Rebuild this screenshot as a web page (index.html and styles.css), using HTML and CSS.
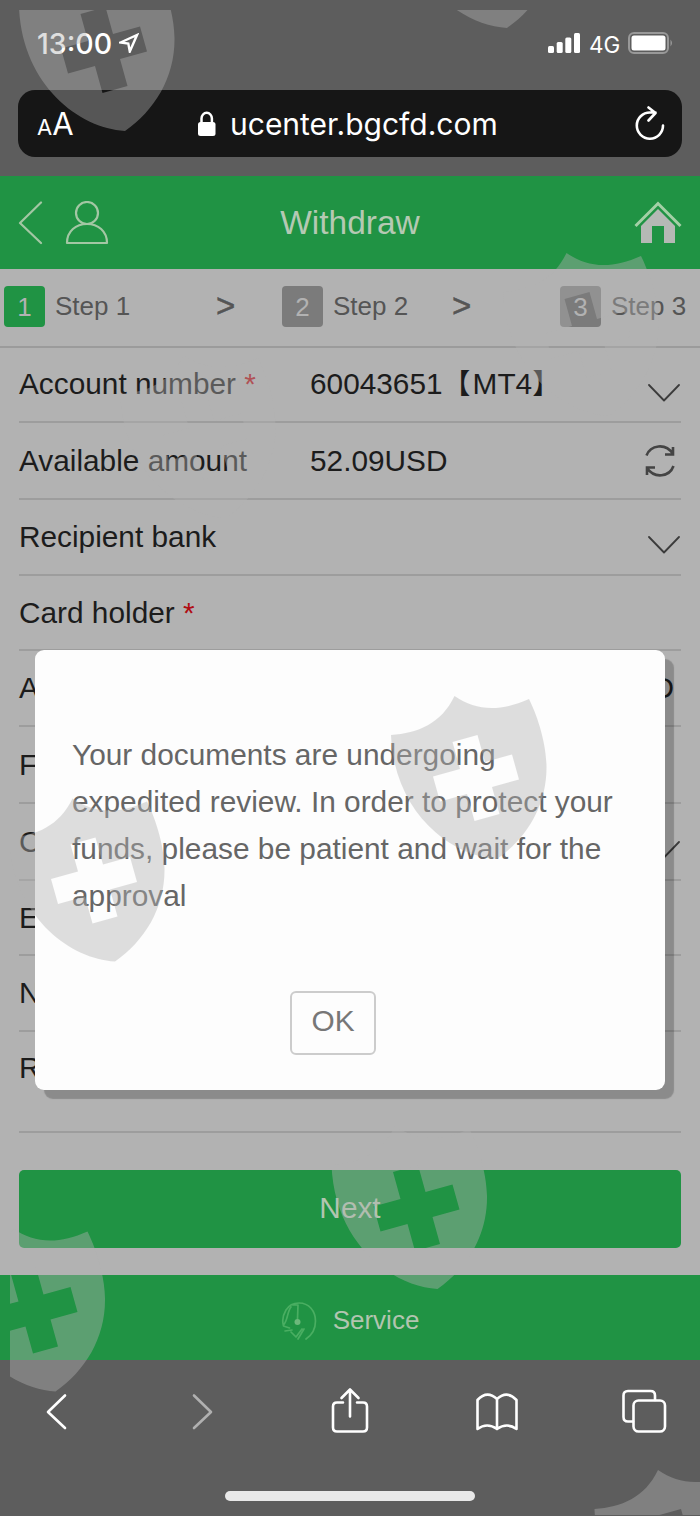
FILE: index.html
```html
<!DOCTYPE html>
<html lang="en">
<head>
<meta charset="utf-8">
<title>Withdraw</title>
<link rel="stylesheet" href="styles.css">
</head>
<body>
<div class="phone">
  <header class="status">
    <span class="clock">13:00</span>
    <svg class="locate" width="20" height="20" viewBox="0 0 20 20"><path d="M1.5 9.5 18 2 10.8 18.500 9.300 10.500Z"/></svg>
    <svg class="signal" width="32" height="20" viewBox="0 0 32 20"><rect x="0" y="13" width="6" height="7" rx="1.5"/><rect x="8.700" y="9" width="6" height="11" rx="1.5"/><rect x="17.300" y="4.500" width="6" height="15.500" rx="1.5"/><rect x="26" y="0" width="6" height="20" rx="1.5"/></svg>
    <span class="network">4G</span>
    <svg class="battery" width="46" height="22" viewBox="0 0 46 22"><rect class="case" x="1" y="1" width="39" height="20" rx="5"/><rect class="level" x="3.500" y="3.500" width="34" height="15" rx="2.500"/><path class="cap" d="M42.500 7.500q3 3.500 0 7z"/></svg>
  </header>
  <div class="address">
    <span class="reader"><small>A</small>A</span>
    <span class="site">
      <svg width="20" height="26" viewBox="0 0 20 26"><rect x="1" y="11" width="17.500" height="14" rx="2.500"/><path d="M4.500 12V7.500a5.200 5.700 0 0 1 10.400 0V12"/></svg>
      <span class="host">ucenter.bgcfd.com</span>
    </span>
    <svg class="reload" width="30" height="36" viewBox="0 0 30 36"><path d="M28 19.500A13.100 13.100 0 1 1 15 6.500h5.500M13.500 1.500 20.500 7 13.500 14.500"/></svg>
  </div>

  <nav class="titlebar">
    <svg class="back" width="26" height="44" viewBox="0 0 26 44"><path d="M23 1.500 2 22 23 42"/></svg>
    <svg class="user" width="44" height="44" viewBox="0 0 44 44"><circle cx="22" cy="12" r="11"/><path d="M2 42C2 30 11 23 22 23S42 30 42 42Z"/></svg>
    <h1>Withdraw</h1>
    <svg class="home" width="48" height="43" viewBox="0 0 48 43"><path class="roof" d="M1.500 25 24 2.500 46.500 25"/><path class="walls" d="M7 25 24 8 41 25V42H30V25H18V42H7Z"/></svg>
  </nav>

  <ol class="steps">
    <li class="on"><b>1</b>Step 1</li>
    <li class="arrow first">&gt;</li>
    <li><b>2</b>Step 2</li>
    <li class="arrow">&gt;</li>
    <li class="last"><b>3</b>Step 3</li>
  </ol>

  <main class="form">
    <div class="row"><label>Account number <i>*</i></label><span class="cjk">60043651<span class="bracket">【</span>MT4<span class="bracket">】</span></span><svg class="down" width="32" height="20" viewBox="0 0 32 20"><path d="M1 2 16 17.500 31 2"/></svg></div>
    <div class="row r77"><label>Available amount</label><span>52.09USD</span>
      <svg class="refresh" width="30" height="32" viewBox="0 0 30 32"><path d="M1.500 10.500C5.500 0 20.500-2.500 28 9M28 2V9.500H20M28.500 21C24.500 32 9.500 34 2 23M2 30V22.500H10"/></svg></div>
    <div class="row"><label>Recipient bank</label><svg class="down" width="32" height="20" viewBox="0 0 32 20"><path d="M1 2 16 17.500 31 2"/></svg></div>
    <div class="row r75"><label>Card holder <i>*</i></label></div>
    <div class="row"><label>A</label><span class="unit">USD</span></div>
    <div class="row r77"><label>F</label></div>
    <div class="row r77"><label>C</label><svg class="down" width="32" height="20" viewBox="0 0 32 20"><path d="M1 2 16 17.500 31 2"/></svg></div>
    <div class="row r75"><label>E</label></div>
    <div class="row"><label>N</label></div>
    <div class="row tall"><label>R</label></div>
    <button class="next">Next</button>
  </main>

  <footer class="service">
    <svg width="36" height="40" viewBox="0 0 36 40"><path d="M5 9C8 4 13 2 18 2 28 2 34.500 10 34.500 20 34.500 28 31 34 25 38M12 4H17L16.500 18M10 6C6 11 7 19 2.500 24M5 9C2 14 1 20 2.500 25l6 2M4 30l7-1M10 31l5 5 6-8M17 38l6-10"/><circle cx="16.500" cy="21" r="3"/></svg>
    <span>Service</span>
  </footer>

  <div class="toolbar">
    <svg width="110" height="48" viewBox="0 0 110 48"><path d="M63 9.500 46 26 63 42"/></svg>
    <svg class="dim" width="110" height="48" viewBox="0 0 110 48"><path d="M45 9.500 62 26 45 42"/></svg>
    <svg width="110" height="48" viewBox="0 0 110 48"><path d="M48 16.500H42Q38 16.500 38 20.500V41.500Q38 45.500 42 45.500H68Q72 45.500 72 41.500V20.500Q72 16.500 68 16.500H62M55 30.500V3.500M46.500 12 55 3.500 63.500 12"/></svg>
    <svg width="110" height="48" viewBox="0 0 110 48"><path d="M55 43Q45 36 35.500 43V14Q45 4 55 13 65 4 74.500 14V43Q65 36 55 43V13"/></svg>
    <svg width="110" height="48" viewBox="0 0 110 48"><rect x="45.500" y="14.500" width="31.500" height="31" rx="5"/><path d="M45 35.500H40Q35.500 35.500 35.500 31V9.500Q35.500 5 40 5H62.500Q67 5 67 9.500V14"/></svg>
  </div>
  <div class="indicator"></div>

  <section class="dialog">
    <p>Your documents are undergoing expedited review. In order to protect your funds, please be patient and wait for the approval</p>
    <button>OK</button>
  </section>

  <svg class="shields" width="700" height="1516" viewBox="0 0 700 1516">
    <defs>
      <clipPath id="inner"><rect x="10" y="10" width="690" height="1505"/></clipPath>
      <path id="shield" fill-rule="evenodd" d="M391 735C418 733 441 724 454.500 696 476 711 500 712 529 699 536 713 546 740 546.500 766 547 805 527 838 497 859 450 856 394 812 391 735ZM512 754.500 519 779.500 492 787 499.500 814 474.500 821 467 794 440 801.500 433 776.500 460 769 452.500 742 477.500 735 485 762Z"/>
    </defs>
    <g clip-path="url(#inner)">
      <use href="#shield"/>
      <use href="#shield" x="-382" y="102.500"/>
      <use href="#shield" x="-59.500" y="430"/>
      <use href="#shield" x="-441.500" y="532.500"/>
      <use href="#shield" x="-372" y="-728"/>
      <use href="#shield" x="10" y="-831"/>
      <use href="#shield" x="-271" y="-341"/>
      <use href="#shield" x="112" y="-443"/>
      <use href="#shield" x="203.500" y="774"/>
    </g>
  </svg>
</div>
</body>
</html>
```
FILE: styles.css
```css
* { box-sizing: border-box; }
body { margin: 0; background: #5d5d5d; }
svg { display: block; flex: none; fill: none; stroke-linecap: round; stroke-linejoin: round; }
button { font: inherit; border: 0; padding: 0; }

.phone {
  position: relative;
  display: flex;
  flex-direction: column;
  width: 700px;
  height: 1516px;
  overflow: hidden;
  background: #5d5d5d;
  font: 29.8px "Liberation Sans", Arial, "Noto Sans CJK SC", sans-serif;
  color: #1c1c1c;
}

.status {
  display: flex;
  align-items: center;
  height: 90px;
  padding: 0 26px 4px 37px;
  color: #fff;
  font-family: Inter, sans-serif;
}
.clock { width: 75px; margin-right: 7px; padding-top: 1px; font-size: 28.500px; font-weight: 500; white-space: nowrap; }
.locate { stroke: #fff; stroke-width: 2.400; stroke-linejoin: miter; }
.signal { margin-left: auto; fill: #fff; }
.network { width: 31px; margin: 0 8px 0 9px; padding-top: 2px; font-size: 22.500px; white-space: nowrap; }
.case { stroke: #999; stroke-width: 2; }
.level { fill: #fff; }
.cap { fill: #999; }

.address {
  display: flex;
  align-items: center;
  height: 67px;
  margin: 0 18px 19px;
  padding: 0 17px 0 19px;
  border-radius: 17px;
  background: #161616;
  color: #fff;
  font-family: Inter, sans-serif;
}
.reader { width: 40px; font-size: 31px; white-space: nowrap; }
.reader small { font-size: 22px; }
.site { display: flex; align-items: center; gap: 13px; margin-left: 120px; }
.site rect { fill: #fff; }
.site path { stroke: #fff; stroke-width: 2.500; }
.host { width: 268px; font-size: 30px; white-space: nowrap; }
.reload { margin-left: auto; stroke: #fff; stroke-width: 2.600; }

.titlebar {
  display: flex;
  align-items: center;
  height: 93px;
  padding: 0 18px 0 18px;
  background: #209344;
  color: #b5c9b3;
}
.back, .user { stroke: #a3c7a4; stroke-width: 2.200; }
.user { margin-left: 21px; }
.titlebar h1 { flex: 1; margin: 0; padding-right: 43px; text-align: center; font-size: 33.500px; font-weight: 400; }
.roof { stroke: #a3d0a6; stroke-width: 3; stroke-linecap: butt; stroke-linejoin: miter; }
.walls { fill: #b5b9b5; }

.steps {
  display: flex;
  align-items: center;
  height: 79px;
  margin: 0;
  padding: 0 0 3px 4px;
  border-bottom: 2px solid #9b9b9b;
  background: #b2b2b2;
  color: #555;
  font-size: 26px;
  list-style: none;
}
.steps li { display: flex; align-items: center; gap: 10px; width: 278px; }
.steps b { width: 41px; height: 41px; border-radius: 4px; background: #7b7b7b; color: #b2b2b2; font-weight: 400; line-height: 42px; text-align: center; }
.steps .on b { background: #209344; }
.steps .on { width: 212px; }
.steps .arrow { width: 108px; font-size: 33px; -webkit-text-stroke: .5px #555; }
.steps .first { width: 66px; }
.steps li:nth-child(3) { width: 170px; }
.steps .last { width: 140px; }

.form { height: 927px; padding: 0 19px; background: #b2b2b2; }
.row { display: flex; align-items: center; height: 76px; border-bottom: 2px solid #9d9d9d; padding-right: 1px; white-space: nowrap; }
.row:first-child { height: 75px; }
.row label { width: 291px; }
.row i { display: inline-block; color: #b00d14; font-style: normal; }
.row:first-child label, .cjk { line-height: 34px; margin-top: -1px; }
.bracket { display: inline-block; width: 30px; font-size: 28px; line-height: 30px; }
.r77 { height: 77px !important; }
.r75 { height: 75px; }
.tall { height: 101px; padding-bottom: 27px; }
.unit { margin-left: auto; margin-right: 6px; }
.down { margin: 16px 0 0 auto; stroke: #3b3b3b; stroke-width: 1.800; }
.refresh { margin-left: auto; margin-right: 5px; stroke: #444; stroke-width: 2.600; stroke-linejoin: miter; stroke-linecap: butt; }

.next { display: block; width: 662px; height: 78px; margin-top: 37px; padding-bottom: 2px; border-radius: 5px; background: #209344; color: #b2c5b0; }

.service {
  display: flex;
  align-items: center;
  justify-content: center;
  gap: 16px;
  height: 85px;
  padding-top: 6px;
  background: #209344;
  color: #b2c5b0;
  font-size: 26px;
}
.service svg { stroke: #4aae62; stroke-width: 1.700; }
.service circle { fill: #6cb87b; stroke: none; }

.toolbar { display: flex; justify-content: space-between; padding: 26px 2px 0; stroke: #fff; stroke-width: 2.600; }
.toolbar svg { width: 110px; }
.toolbar .dim { stroke: #b0b0b0; }
.indicator { width: 250px; height: 10px; margin: 57px auto 0; border-radius: 5px; background: #e8e8e8; }

.dialog {
  position: absolute;
  left: 35px;
  top: 650px;
  width: 630px;
  height: 440px;
  padding: 82px 37px 0;
  border-radius: 9px;
  background: #fdfdfd;
  box-shadow: 9px 9px 1px rgba(0, 0, 0, .22);
  color: #666;
}
.dialog p { width: 556px; margin: 0 0 71px; line-height: 46.900px; font-size: 29.850px; }
.dialog button { display: block; width: 86px; height: 64px; margin: 0 0 0 218px; padding-bottom: 3px; border: 2px solid #ccc; border-radius: 6px; background: transparent; color: #777; }

.shields { position: absolute; left: 0; top: 0; fill: #b2b2b2; opacity: .41; pointer-events: none; }
```
